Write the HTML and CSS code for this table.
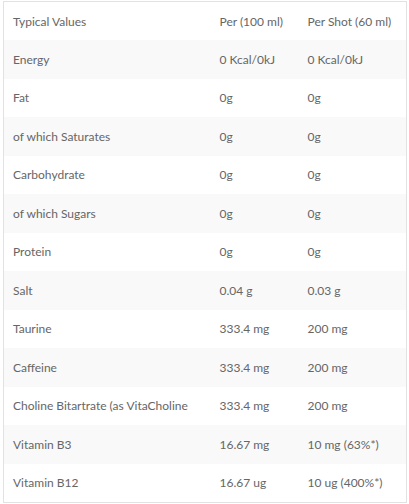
FILE: index.html
```html
<!DOCTYPE html>
<html>
<head>
<meta charset="utf-8">
<link rel="stylesheet" href="styles.css">
</head>
<body>
<table class="nutrition">
  <colgroup>
    <col class="c1"><col class="c2"><col class="c3">
  </colgroup>
  <tbody>
    <tr><td>Typical Values</td><td>Per (100 ml)</td><td>Per Shot (60 ml)</td></tr>
    <tr><td>Energy</td><td>0 Kcal/0kJ</td><td>0 Kcal/0kJ</td></tr>
    <tr><td>Fat</td><td>0g</td><td>0g</td></tr>
    <tr><td>of which Saturates</td><td>0g</td><td>0g</td></tr>
    <tr><td>Carbohydrate</td><td>0g</td><td>0g</td></tr>
    <tr><td>of which Sugars</td><td>0g</td><td>0g</td></tr>
    <tr><td>Protein</td><td>0g</td><td>0g</td></tr>
    <tr><td>Salt</td><td>0.04 g</td><td>0.03 g</td></tr>
    <tr><td>Taurine</td><td>333.4 mg</td><td>200 mg</td></tr>
    <tr><td>Caffeine</td><td>333.4 mg</td><td>200 mg</td></tr>
    <tr><td>Choline Bitartrate (as VitaCholine</td><td>333.4 mg</td><td>200 mg</td></tr>
    <tr><td>Vitamin B3</td><td>16.67 mg</td><td>10 mg (63%*)</td></tr>
    <tr><td>Vitamin B12</td><td>16.67 ug</td><td>10 ug (400%*)</td></tr>
  </tbody>
</table>
</body>
</html>
```
FILE: styles.css
```css
html, body {
  background: #ffffff;
}
body {
  margin: 1px 0 0 3px;
  font-family: Lato, "Liberation Sans", sans-serif;
  font-size: 12px;
  color: #666666;
}
.nutrition {
  width: 403px;
  border-collapse: collapse;
  border: 1px solid #e2e2e2;
  table-layout: fixed;
}
.c1 { width: 207px; }
.c2 { width: 88px; }
.c3 { width: 108px; }
.nutrition td {
  height: 38.5px;
  padding: 0 0 0 9px;
  box-sizing: border-box;
  vertical-align: middle;
  white-space: nowrap;
  overflow: hidden;
}
.nutrition tr:nth-child(even) td {
  background: #f9f9f9;
}
```
